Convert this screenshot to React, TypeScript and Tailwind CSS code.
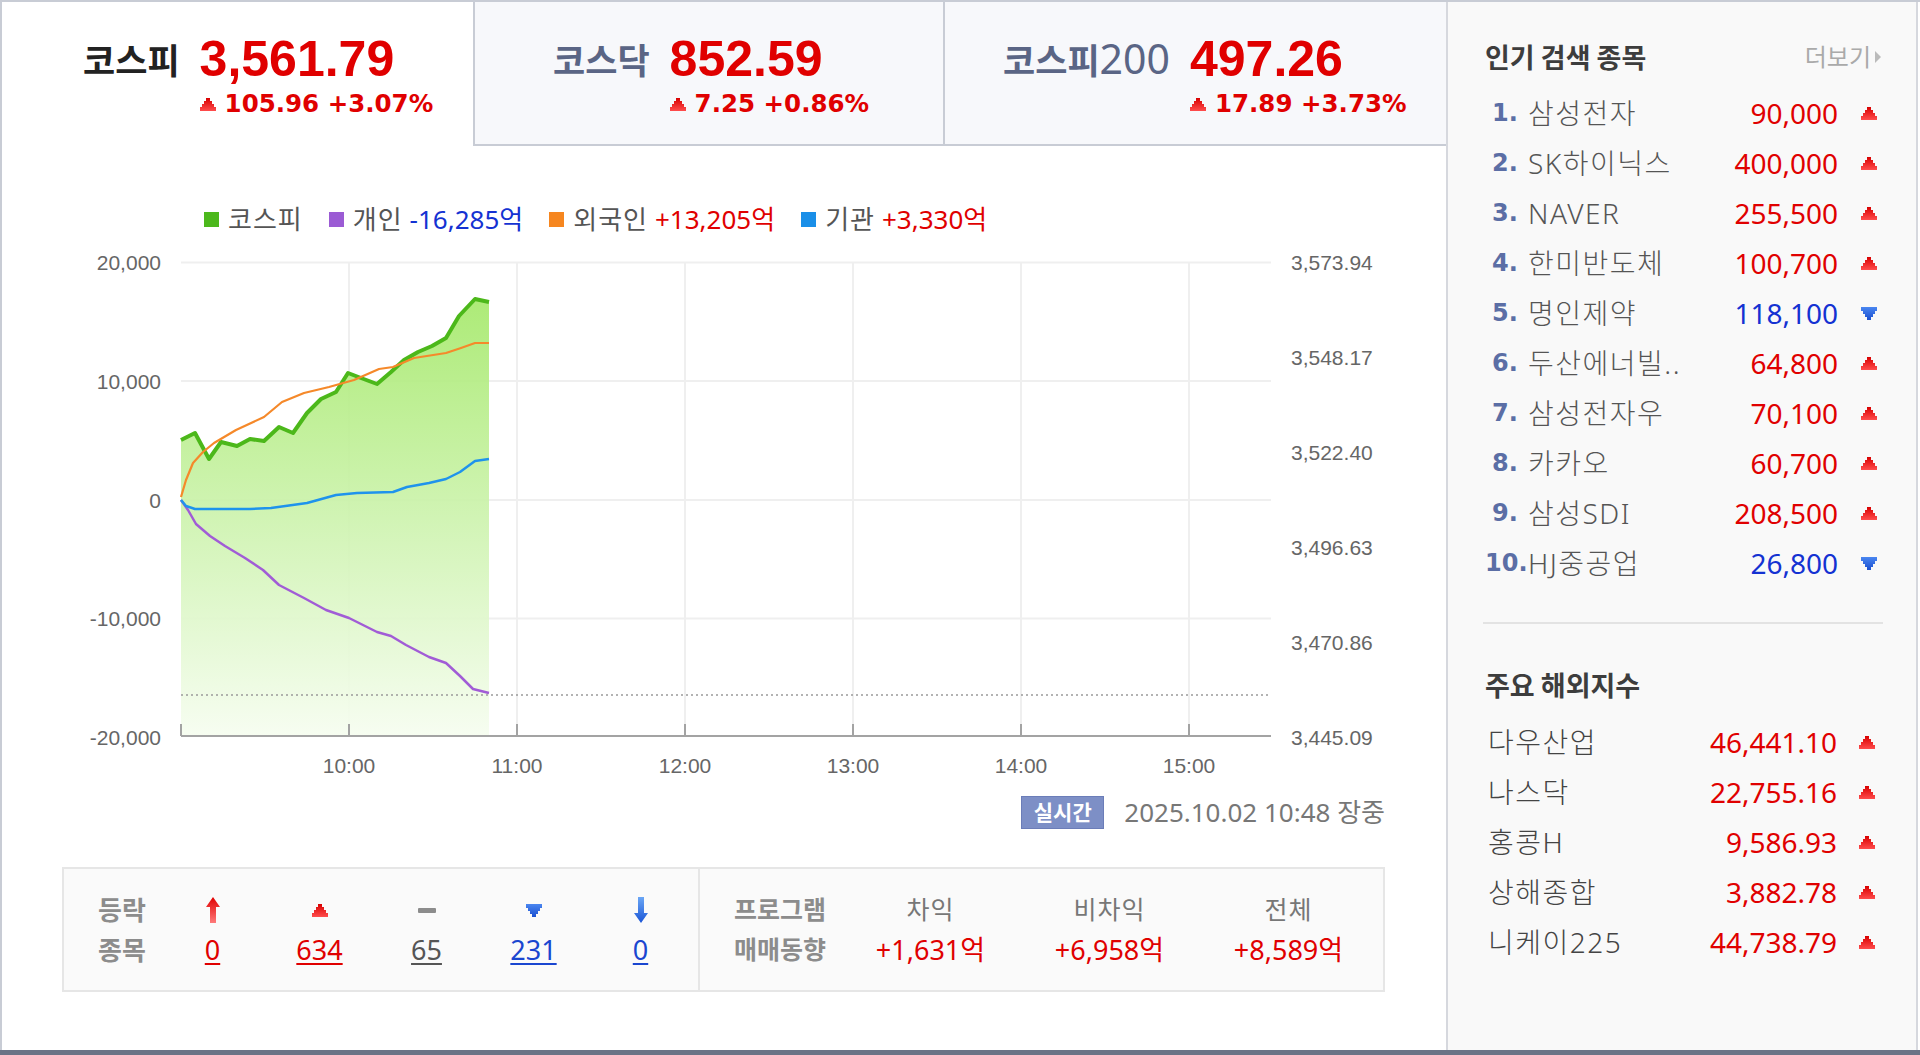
import React from "react";

const RED = "text-[#e00000]";

function UpTri({ className = "" }: { className?: string }) {
  return (
    <svg width="16" height="13" viewBox="0 0 16 13" className={className}>
      <defs>
        <linearGradient id="gup" x1="0" y1="0" x2="0" y2="1">
          <stop offset="0" stopColor="#d80000" />
          <stop offset="1" stopColor="#ff4d4d" />
        </linearGradient>
      </defs>
      <path d="M6 0h4v3h2v3h2v3h2v4H0V9h2V6h2V3h2z" fill="url(#gup)" />
    </svg>
  );
}

function DownTri({ className = "" }: { className?: string }) {
  return (
    <svg width="16" height="13" viewBox="0 0 16 13" className={className}>
      <defs>
        <linearGradient id="gdn" x1="0" y1="0" x2="0" y2="1">
          <stop offset="0" stopColor="#4a86f0" />
          <stop offset="1" stopColor="#1a4fd0" />
        </linearGradient>
      </defs>
      <path d="M0 0h16v4h-2v3h-2v3h-2v3H6v-3H4V7H2V4H0z" fill="url(#gdn)" />
    </svg>
  );
}

function UpArrow() {
  return (
    <svg width="14" height="26" viewBox="0 0 14 26">
      <defs>
        <linearGradient id="gua" x1="0" y1="0" x2="0" y2="1">
          <stop offset="0" stopColor="#e00000" />
          <stop offset="1" stopColor="#ff7a7a" />
        </linearGradient>
      </defs>
      <path d="M7 0L14 10H10V26H4V10H0z" fill="url(#gua)" />
    </svg>
  );
}

function DownArrow() {
  return (
    <svg width="14" height="26" viewBox="0 0 14 26">
      <defs>
        <linearGradient id="gda" x1="0" y1="0" x2="0" y2="1">
          <stop offset="0" stopColor="#6aa6f5" />
          <stop offset="1" stopColor="#1a55d6" />
        </linearGradient>
      </defs>
      <path d="M4 0H10V16H14L7 26L0 16H4z" fill="url(#gda)" />
    </svg>
  );
}

const popular = [
  { n: "1.", name: "삼성전자", p: "90,000", up: true },
  { n: "2.", name: "SK하이닉스", p: "400,000", up: true },
  { n: "3.", name: "NAVER", p: "255,500", up: true },
  { n: "4.", name: "한미반도체", p: "100,700", up: true },
  { n: "5.", name: "명인제약", p: "118,100", up: false },
  { n: "6.", name: "두산에너빌..", p: "64,800", up: true },
  { n: "7.", name: "삼성전자우", p: "70,100", up: true },
  { n: "8.", name: "카카오", p: "60,700", up: true },
  { n: "9.", name: "삼성SDI", p: "208,500", up: true },
  { n: "10.", name: "HJ중공업", p: "26,800", up: false },
];

const overseas = [
  { name: "다우산업", p: "46,441.10" },
  { name: "나스닥", p: "22,755.16" },
  { name: "홍콩H", p: "9,586.93" },
  { name: "상해종합", p: "3,882.78" },
  { name: "니케이225", p: "44,738.79" },
];

const greenPts =
  "181,440 195,433 209,459 221,442 237,446 250,439 264,441 279,427 293,433 307,413 321,399 336,392 348,373 361,378 377,384 391,372 404,360 418,352 432,346 446,338 459,316 475,299 489,302";
const orangePts =
  "181,497 186,480 193,463 203,452 214,443 236,430 264,417 282,402 304,393 329,387 354,380 379,369 393,367 414,358 446,353 461,348 475,343 489,343";
const bluePts =
  "181,500 186,506 195,509 250,509 271,508 307,503 336,495 357,493 393,492 407,487 429,483 446,479 460,472 475,461 489,459";
const purplePts =
  "181,500 188,510 196,524 210,536 225,546 245,558 263,570 279,585 304,598 326,610 349,618 377,632 391,636 406,645 429,657 446,663 460,676 473,689 489,693";

const hours = [
  { x: 349, t: "10:00" },
  { x: 517, t: "11:00" },
  { x: 685, t: "12:00" },
  { x: 853, t: "13:00" },
  { x: 1021, t: "14:00" },
  { x: 1189, t: "15:00" },
];
const leftLabels = [
  { y: 262.5, t: "20,000" },
  { y: 381, t: "10,000" },
  { y: 500, t: "0" },
  { y: 618.5, t: "-10,000" },
  { y: 737, t: "-20,000" },
];
const rightLabels = [
  { y: 262, t: "3,573.94" },
  { y: 357, t: "3,548.17" },
  { y: 452, t: "3,522.40" },
  { y: 547, t: "3,496.63" },
  { y: 642, t: "3,470.86" },
  { y: 737, t: "3,445.09" },
];

function Chart() {
  return (
    <svg width="1444" height="540" viewBox="2 246 1444 540">
      <defs>
        <linearGradient id="gfill" gradientUnits="userSpaceOnUse" x1="0" y1="300" x2="0" y2="736">
          <stop offset="0" stopColor="#a6e96c" />
          <stop offset="0.5" stopColor="#cdf3ae" />
          <stop offset="1" stopColor="#f6fdf0" />
        </linearGradient>
      </defs>
      {leftLabels.slice(0, 4).map((l) => (
        <line key={l.t} x1="181" x2="1271" y1={l.y} y2={l.y} stroke="#efefef" strokeWidth="2" />
      ))}
      {hours.map((h) => (
        <line key={h.t} x1={h.x} x2={h.x} y1="262" y2="736" stroke="#efefef" strokeWidth="2" />
      ))}
      <path d={`M181,736 L${greenPts.split(" ").join(" L")} L489,736 Z`} fill="url(#gfill)" opacity="0.92" />
      <line x1="181" x2="1271" y1="695" y2="695" stroke="#9a9a9a" strokeWidth="1.6" strokeDasharray="2 3" />
      <polyline points={greenPts} fill="none" stroke="#4cb81a" strokeWidth="4" strokeLinejoin="round" />
      <polyline points={purplePts} fill="none" stroke="#a15cd6" strokeWidth="2.5" strokeLinejoin="round" />
      <polyline points={orangePts} fill="none" stroke="#f5892a" strokeWidth="2.2" strokeLinejoin="round" />
      <polyline points={bluePts} fill="none" stroke="#1f93ec" strokeWidth="2.5" strokeLinejoin="round" />
      <line x1="181" x2="1271" y1="736" y2="736" stroke="#a3a3a3" strokeWidth="2" />
      <line x1="181" x2="181" y1="724" y2="736" stroke="#a3a3a3" strokeWidth="2" />
      {hours.map((h) => (
        <line key={"t" + h.t} x1={h.x} x2={h.x} y1="724" y2="736" stroke="#a3a3a3" strokeWidth="2" />
      ))}
      <g fontFamily="Liberation Sans, sans-serif" fontSize="21" fill="#666">
        {leftLabels.map((l) => (
          <text key={l.t} x="161" y={l.y} textAnchor="end" dominantBaseline="central">
            {l.t}
          </text>
        ))}
        {rightLabels.map((l) => (
          <text key={l.t} x="1291" y={l.y} textAnchor="start" dominantBaseline="central">
            {l.t}
          </text>
        ))}
        {hours.map((h) => (
          <text key={"l" + h.t} x={h.x} y="765" textAnchor="middle" dominantBaseline="central">
            {h.t}
          </text>
        ))}
      </g>
    </svg>
  );
}

function IndexTab({
  label,
  sub,
  value,
  change,
  labelColor,
  className,
}: {
  label: string;
  sub?: string;
  value: string;
  change: string;
  labelColor: string;
  className: string;
}) {
  return (
    <div className={`flex pt-[32px] ${className}`}>
      <div className={`h-[50px] flex items-center text-[35px] font-bold font-['Noto_Sans_CJK_KR',sans-serif] ${labelColor}`}>
        {label}
        {sub && <span className="text-[41px] font-normal font-['Noto_Sans',sans-serif]">{sub}</span>}
      </div>
      <div className="ml-[20px] flex flex-col">
        <div className={`leading-[50px] text-[50px] font-bold font-['Liberation_Sans',sans-serif] ${RED}`}>{value}</div>
        <div className={`mt-[8px] flex items-center leading-[24px] text-[24.5px] font-bold font-['DejaVu_Sans',sans-serif] ${RED}`}>
          <UpTri className="mr-[9px]" />
          {change}
        </div>
      </div>
    </div>
  );
}

function LegendItem({ color, label, value, valueColor }: { color: string; label: string; value?: string; valueColor?: string }) {
  return (
    <div className="flex items-center">
      <div className={`w-[15px] h-[15px] ${color}`} />
      <span className="ml-[9px] text-[#555] tracking-[1px]">{label}</span>
      {value && <span className={`ml-[7px] ${valueColor}`}>{value}</span>}
    </div>
  );
}

export default function App() {
  return (
    <div className="w-[1920px] h-[1055px] bg-white flex flex-col overflow-hidden font-['Noto_Sans','Noto_Sans_CJK_KR',sans-serif]">
      <div className="flex h-[1050px] border-t-2 border-[#c8ccd5]">
        {/* Left */}
        <div className="w-[1446px] flex flex-col border-l-2 border-[#c8ccd5]">
          <div className="flex h-[144px]">
            <IndexTab
              className="w-[471px] bg-white pl-[81px]"
              label="코스피"
              value="3,561.79"
              change="105.96 +3.07%"
              labelColor="text-[#222]"
            />
            <IndexTab
              className="w-[470px] bg-[#f7f8fb] border-l-2 border-b-2 border-[#c8ccd5] pl-[78px]"
              label="코스닥"
              value="852.59"
              change="7.25 +0.86%"
              labelColor="text-[#5a6585]"
            />
            <IndexTab
              className="w-[503px] bg-[#f7f8fb] border-l-2 border-b-2 border-[#c8ccd5] pl-[58px]"
              label="코스피"
              sub="200"
              value="497.26"
              change="17.89 +3.73%"
              labelColor="text-[#5a6585]"
            />
          </div>

          <div className="mt-[58px] h-[30px] pl-[202px] flex items-center gap-[26px] text-[26px]">
            <LegendItem color="bg-[#4cb81c]" label="코스피" />
            <LegendItem color="bg-[#9b5bd4]" label="개인" value="-16,285억" valueColor="text-[#1432d2]" />
            <LegendItem color="bg-[#f6861f]" label="외국인" value="+13,205억" valueColor="text-[#e00000]" />
            <LegendItem color="bg-[#1a8fe8]" label="기관" value="+3,330억" valueColor="text-[#e00000]" />
          </div>

          <div className="mt-[12px]">
            <Chart />
          </div>

          <div className="mt-[10px] h-[33px] flex justify-end items-center pr-[61px]">
            <div className="w-[83px] h-[33px] bg-[#7d8fc6] border border-[#6b7db8] text-white text-[21px] font-bold flex items-center justify-center">
              실시간
            </div>
            <span className="ml-[20px] text-[26px] text-[#777]">2025.10.02 10:48 장중</span>
          </div>

          <div className="mt-[38px] ml-[60px] w-[1323px] h-[125px] border-2 border-[#e6e6e6] bg-[#fafafa] flex">
            <div className="w-[634px] pl-[34px] pt-[21px] flex">
              <div className="w-[61px] flex flex-col text-[26px] font-bold text-[#8c8c8c]">
                <div className="h-[40px] flex items-center">등락</div>
                <div className="h-[40px] flex items-center">종목</div>
              </div>
              {[
                { icon: <UpArrow />, v: "0", c: "text-[#e00000]" },
                { icon: <UpTri />, v: "634", c: "text-[#e00000]" },
                { icon: <div className="w-[18px] h-[5px] rounded-[1px] bg-[#8c8c8c]" />, v: "65", c: "text-[#555]" },
                { icon: <DownTri />, v: "231", c: "text-[#1a46d0]" },
                { icon: <DownArrow />, v: "0", c: "text-[#1a46d0]" },
              ].map((col, i) => (
                <div key={i} className="w-[107px] flex flex-col items-center">
                  <div className="h-[40px] flex items-center justify-center">{col.icon}</div>
                  <div className={`h-[40px] flex items-center text-[27px] underline decoration-2 underline-offset-[3px] ${col.c}`}>
                    {col.v}
                  </div>
                </div>
              ))}
            </div>
            <div className="flex-1 border-l-2 border-[#e6e6e6] pl-[34px] pt-[21px] flex">
              <div className="w-[107px] flex flex-col text-[25px] font-bold text-[#8c8c8c]">
                <div className="h-[40px] flex items-center">프로그램</div>
                <div className="h-[40px] flex items-center">매매동향</div>
              </div>
              {[
                { l: "차익", v: "+1,631억" },
                { l: "비차익", v: "+6,958억" },
                { l: "전체", v: "+8,589억" },
              ].map((c) => (
                <div key={c.l} className="w-[179px] flex flex-col items-center">
                  <div className="h-[40px] flex items-center text-[25px] text-[#777] tracking-[1px]">{c.l}</div>
                  <div className="h-[40px] flex items-center text-[27px] text-[#e00000]">{c.v}</div>
                </div>
              ))}
            </div>
          </div>
        </div>

        {/* Right panel */}
        <div className="w-[472px] flex flex-col border-l-2 border-r-2 border-[#d6d8de] bg-[#f9f9f9]">
          <div className="mt-[40px] h-[30px] pl-[37px] pr-[34px] flex items-center justify-between">
            <span className="text-[27px] font-bold text-[#3d3d3d] font-['Noto_Sans_CJK_KR',sans-serif]">인기 검색 종목</span>
            <span className="flex items-center text-[24px] text-[#aaa]">
              더보기
              <svg width="8" height="12" viewBox="0 0 8 12" className="ml-[3px]">
                <path d="M1 0L7 6L1 12z" fill="#bbb" />
              </svg>
            </span>
          </div>

          <div className="mt-[16px] flex flex-col">
            {popular.map((r) => (
              <div key={r.n} className="h-[50px] flex items-center pl-[44px] pr-[39px]">
                <span
                  className={`${r.n === "10." ? "-ml-[7px] w-[43px]" : "w-[36px]"} shrink-0 text-[24px] font-bold text-[#5b6ea5] font-['DejaVu_Sans',sans-serif]`}
                >
                  {r.n}
                </span>
                <span className="flex-1 text-[28px] font-light text-[#555] tracking-[1.5px] whitespace-nowrap">{r.name}</span>
                <span className={`text-[28px] ${r.up ? "text-[#e00000]" : "text-[#1432d2]"}`}>{r.p}</span>
                <span className="ml-[23px] flex items-center">{r.up ? <UpTri /> : <DownTri />}</span>
              </div>
            ))}
          </div>

          <div className="mt-[34px] ml-[35px] mr-[33px] h-[2px] bg-[#e3e3e3]" />

          <div className="mt-[46px] h-[30px] pl-[37px] flex items-center">
            <span className="text-[27px] font-bold text-[#3d3d3d] font-['Noto_Sans_CJK_KR',sans-serif]">주요 해외지수</span>
          </div>

          <div className="mt-[17px] flex flex-col">
            {overseas.map((r) => (
              <div key={r.name} className="h-[50px] flex items-center pl-[40px] pr-[41px]">
                <span className="flex-1 text-[28px] font-light text-[#444] tracking-[1.5px]">{r.name}</span>
                <span className="text-[28px] text-[#e00000]">{r.p}</span>
                <span className="ml-[22px] flex items-center">
                  <UpTri />
                </span>
              </div>
            ))}
          </div>
        </div>
      </div>
      <div className="h-[5px] bg-[#6b7386]" />
    </div>
  );
}
